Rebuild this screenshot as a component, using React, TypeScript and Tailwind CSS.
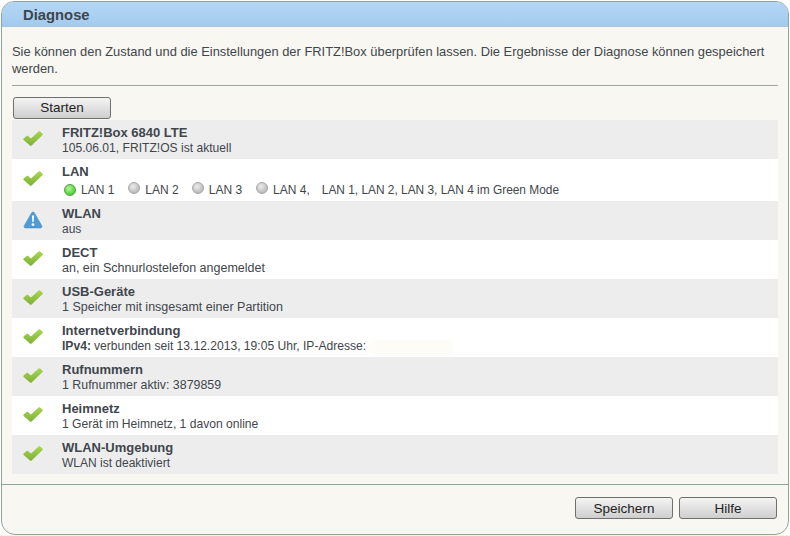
import React from "react";

const Check = () => (
  <svg width="22" height="18" viewBox="0 0 22 18">
    <defs>
      <linearGradient id="chk" x1="0" y1="0" x2="0" y2="1">
        <stop offset="0" stopColor="#a8d64e" />
        <stop offset="1" stopColor="#7fb03a" />
      </linearGradient>
    </defs>
    <path d="M1.6 8.6 L4.6 6 C5.1 5.6 5.6 5.6 6.1 6 L8.9 8.5 L16.6 1.6 C17.1 1.2 17.6 1.2 18.1 1.6 L20.6 3.8 C21 4.2 21 4.7 20.6 5.1 L9.6 15.6 C9.1 16.1 8.5 16.1 8 15.6 L1.6 10 C1.2 9.6 1.2 9 1.6 8.6 Z" fill="url(#chk)" />
  </svg>
);

const Warn = () => (
  <svg width="20" height="18" viewBox="0 0 20 18">
    <path d="M10 1 C10.8 1 11.2 1.5 11.6 2.2 L18.6 14.4 C19.3 15.8 18.8 17 17.2 17 L2.8 17 C1.2 17 0.7 15.8 1.4 14.4 L8.4 2.2 C8.8 1.5 9.2 1 10 1 Z" fill="#4f9bd5" stroke="#3d85bf" strokeWidth="0.5" />
    <path d="M8.9 4.5 H11.1 L10.7 11 H9.3 Z" fill="#ffffff" />
    <circle cx="10" cy="13.6" r="1.4" fill="#ffffff" />
  </svg>
);

const Led = ({ on }: { on?: boolean }) => (
  <span
    className={
      on
        ? "inline-block h-3 w-3 rounded-full border border-[#4fa33a] bg-[radial-gradient(circle_at_40%_35%,#b6f59a,#4fd03a_70%)]"
        : "inline-block h-3 w-3 rounded-full border border-[#a8a8a8] bg-[radial-gradient(circle_at_40%_35%,#ececec,#bcbcbc_70%)]"
    }
  />
);

const Btn = ({ label }: { label: string }) => (
  <button className="h-[22px] w-[98px] rounded-[3px] border border-[#6f6f6f] bg-gradient-to-b from-[#f4f4f4] to-[#cfcfcf] pt-px text-[13.5px] leading-[18px] text-[#222]">
    {label}
  </button>
);

const Row = ({
  title,
  icon,
  shaded,
  children,
  tall,
  size = "text-[12px]",
}: {
  title: string;
  icon?: React.ReactNode;
  shaded?: boolean;
  tall?: boolean;
  size?: string;
  children: React.ReactNode;
}) => (
  <div className={"flex " + (tall ? "h-[42px] " : "h-[39px] ") + (shaded ? "bg-[#ededed]" : "bg-white")}>
    <div className="flex w-[42px] shrink-0 items-center justify-center pb-[2px]">{icon ?? <Check />}</div>
    <div className="ml-[8px] pt-[5px]">
      <div className="text-[13px] font-bold leading-[15px] text-[#3f464c]">{title}</div>
      <div className={size + " leading-[15px] text-[#3f464c] " + (tall ? "mt-[3px]" : "mt-px")}>{children}</div>
    </div>
  </div>
);

export default function App() {
  return (
    <div className="h-[536px] w-[790px] border-b border-[#f6f7d0] bg-white pt-px pl-px font-['Liberation_Sans',Arial,sans-serif]">
      <div className="flex h-[534px] w-[788px] flex-col overflow-hidden rounded-t-[13px] rounded-b-[14px] border border-[#8fa89e] bg-[#f8f7f2]">
        <div className="h-[25px] shrink-0 border-b border-[#a9c4dc] bg-gradient-to-b from-[#b4d6f5] to-[#a3cbee] pl-[21px] text-[14.8px] font-bold leading-[26px] text-[#3f464c]">
          Diagnose
        </div>
        <div className="flex-1 px-[10px]">
          <p className="pt-[16px] text-[12.9px] leading-[17px] text-[#3f464c]">
            Sie können den Zustand und die Einstellungen der FRITZ!Box überprüfen lassen. Die Ergebnisse der Diagnose können gespeichert werden.
          </p>
          <div className="mt-[8px] h-px bg-[#9aa69f]" />
          <div className="mt-[9px] pl-[1px]">
            <Btn label="Starten" />
          </div>
          <div className="mt-px w-[766px]">
            <Row title="FRITZ!Box 6840 LTE" shaded size="text-[12.1px]">105.06.01, FRITZ!OS ist aktuell</Row>
            <Row title="LAN" tall>
              <span className="flex items-center pl-[2px]">
                <Led on />
                <span className="ml-[5px]">LAN 1</span>
                <span className="ml-[14px]"><Led /></span>
                <span className="ml-[5px]">LAN 2</span>
                <span className="ml-[13px]"><Led /></span>
                <span className="ml-[5px]">LAN 3</span>
                <span className="ml-[14px]"><Led /></span>
                <span className="ml-[5px]">LAN 4,</span>
                <span className="ml-[12px] text-[11.9px]">LAN 1, LAN 2, LAN 3, LAN 4 im Green Mode</span>
              </span>
            </Row>
            <Row title="WLAN" shaded icon={<Warn />}>aus</Row>
            <Row title="DECT" size="text-[12.5px]">an, ein Schnurlostelefon angemeldet</Row>
            <Row title="USB-Geräte" shaded size="text-[12.5px]">1 Speicher mit insgesamt einer Partition</Row>
            <Row title="Internetverbindung" size="text-[12.1px]">
              <span className="flex items-center">
                <b>IPv4:</b>
                <span className="ml-[3px]">verbunden seit 13.12.2013, 19:05 Uhr, IP-Adresse:</span>
                <span className="ml-[2px] h-[14px] w-[86px] rounded-[6px] bg-[#fdfcf6]" />
              </span>
            </Row>
            <Row title="Rufnummern" shaded size="text-[12.4px]">1 Rufnummer aktiv: 3879859</Row>
            <Row title="Heimnetz" size="text-[12.1px]">1 Gerät im Heimnetz, 1 davon online</Row>
            <Row title="WLAN-Umgebung" shaded>WLAN ist deaktiviert</Row>
          </div>
        </div>
        <div className="flex h-[50px] shrink-0 items-start justify-end gap-[6px] border-t border-[#8fa89e] pt-[12px] pr-[11px]">
          <Btn label="Speichern" />
          <Btn label="Hilfe" />
        </div>
      </div>
    </div>
  );
}
